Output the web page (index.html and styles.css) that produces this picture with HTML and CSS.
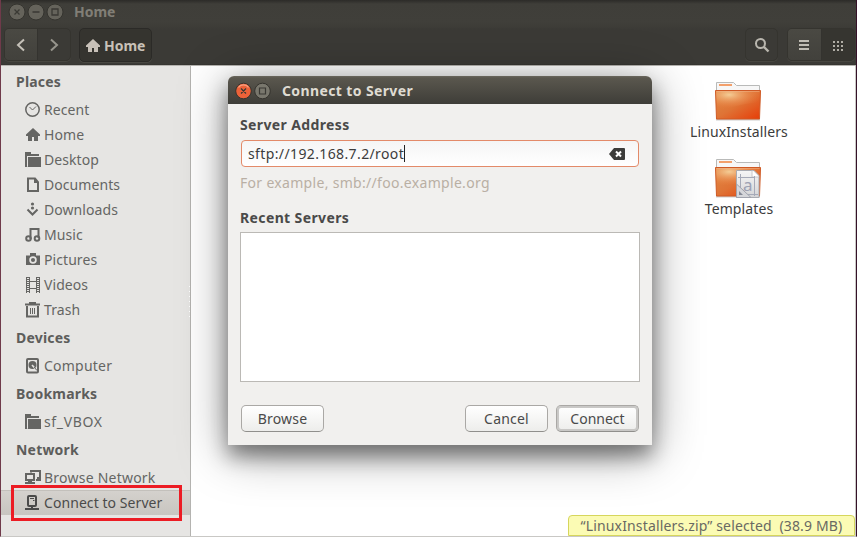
FILE: index.html
```html
<!DOCTYPE html>
<html lang="en">
<head>
<meta charset="utf-8">
<title>Home</title>
<link rel="stylesheet" href="styles.css">
</head>
<body>
<svg class="defs" width="0" height="0">
  <defs>
    <linearGradient id="fold" x1="0" y1="0" x2="1" y2="1"><stop offset="0" stop-color="#e08a45"/><stop offset=".5" stop-color="#df7335"/><stop offset="1" stop-color="#e63c08"/></linearGradient>
    <radialGradient id="glow" cx=".3" cy=".2" r=".75"><stop offset="0" stop-color="#f6d6a0" stop-opacity=".9"/><stop offset="1" stop-color="#ee7a3c" stop-opacity="0"/></radialGradient>
    <linearGradient id="paper" x1="0" y1="0" x2="0" y2="1"><stop offset="0" stop-color="#f6f6f6"/><stop offset="1" stop-color="#d4d4d6"/></linearGradient>
    <symbol id="folder" viewBox="0 0 48 42">
      <path d="M2.500 12V1.500h17l3 3h23V12z" fill="#f7f7f7" stroke="#b9bab9"/>
      <path d="M5 3h13v2H5z" fill="#f3a06c"/>
      <path d="M2 38.500h44" stroke="#000" stroke-opacity=".2" stroke-width="2"/>
      <path d="M1.500 9.500h45l-1 28.500h-43z" fill="url(#fold)" stroke="#cf5a25"/>
      <path d="M2 10h44l-1 12C30 21 16 28 3 29z" fill="url(#glow)"/>
      <path d="M2.500 10.500h43" stroke="#f2b58c" stroke-opacity=".5"/>
    </symbol>
    <symbol id="home" viewBox="0 0 16 16"><path d="M8 1 1 7.500V9h2v5h4v-4h2v4h4V9h2V7.500z" fill="currentColor"/></symbol>
    <symbol id="dir" viewBox="0 0 16 16"><path d="M0 0h6v2h8v2H2v10h14V5H3v10H0z" fill="currentColor"/><path d="M3 5h13v10H3z" fill="currentColor"/><path d="M2.500 15V4.500H15" fill="none" stroke="#e6e5e3" stroke-width=".8"/></symbol>
  </defs>
</svg>
<div class="window">
  <header class="chrome">
    <div class="titlebar">
      <svg class="dots" width="58" height="18" viewBox="0 0 58 18">
        <g fill="#65635b" stroke="#35342f"><circle cx="10" cy="9" r="8"/><circle cx="29" cy="9" r="8"/><circle cx="48" cy="9" r="8"/></g>
        <path d="m7.500 6.500 5 5m0-5-5 5M25.500 9h7M45 6h6v6h-6z" fill="none" stroke="#3a3934" stroke-width="1.300"/>
      </svg>
      <span class="wintitle">Home</span>
    </div>
    <div class="toolbar">
      <div class="group nav">
        <span class="tool raised"><svg width="16" height="16"><path d="M11 2.500 5 8l6 5.500" fill="none" stroke="#c5c1b8" stroke-width="2"/></svg></span>
        <span class="tool"><svg width="16" height="16"><path d="m5 2.500 6 5.500-6 5.500" fill="none" stroke="#97958d" stroke-width="2"/></svg></span>
      </div>
      <div class="path"><svg width="16" height="16"><use href="#home"/></svg><b>Home</b></div>
      <div class="group search"><span class="tool"><svg width="16" height="16"><circle cx="6.500" cy="6.500" r="4.500" fill="none" stroke="#b9b6ae" stroke-width="2"/><path d="m10 10 4.500 4.500" stroke="#b9b6ae" stroke-width="2.400"/></svg></span></div>
      <div class="group views">
        <span class="tool raised"><svg width="16" height="16"><path d="M3 4h10M3 8h10M3 12h10" stroke="#c0bdb4" stroke-width="2"/></svg></span>
        <span class="tool sunk"><svg width="16" height="16"><path d="M3 5h10M3 9h10M3 13h10" stroke="#b0ada5" stroke-width="2" stroke-dasharray="2 2"/></svg></span>
      </div>
    </div>
  </header>
  <div class="main">
    <nav class="side">
      <h2>Places</h2>
      <a><svg width="16" height="16"><circle cx="7.500" cy="7.500" r="6.700" fill="none" stroke="currentColor" stroke-width="1.500"/><path d="m4.500 5 3 3L11 4.500" fill="none" stroke="currentColor"/></svg><span>Recent</span></a>
      <a><svg width="16" height="16"><use href="#home"/></svg><span>Home</span></a>
      <a><svg width="16" height="16"><use href="#dir"/></svg><span>Desktop</span></a>
      <a><svg width="16" height="16"><path d="M3 1.500h7L13 5v9H3z" fill="none" stroke="currentColor" stroke-width="2"/><path d="M9 1v5h5z" fill="currentColor"/></svg><span>Documents</span></a>
      <a><svg width="16" height="16"><circle cx="7.500" cy="2" r="1.600" fill="currentColor"/><circle cx="7.500" cy="6" r="1.600" fill="currentColor"/><path d="m2.500 7.500 5 5 5-5" fill="none" stroke="currentColor" stroke-width="2"/></svg><span>Downloads</span></a>
      <a><svg width="16" height="16"><path d="M5.500 12V2h8v9" fill="none" stroke="currentColor" stroke-width="2"/><circle cx="3.500" cy="11.500" r="2.300" fill="none" stroke="currentColor" stroke-width="2"/><circle cx="12" cy="11.500" r="2.300" fill="none" stroke="currentColor" stroke-width="2"/></svg><span>Music</span></a>
      <a><svg width="16" height="16"><path d="M1 3.500h4V1h6v2.500h4V13H1z" fill="currentColor"/><circle cx="8" cy="8" r="2.900" fill="none" stroke="#e6e5e3" stroke-width="1.700"/></svg><span>Pictures</span></a>
      <a><svg width="16" height="16"><path d="M1.500 0v16M4.500 0v16M11.500 0v16M14.500 0v16M4 4.500h8M4 11.500h8" stroke="currentColor"/><path d="M3 0v16M13 0v16" stroke="currentColor" stroke-width="2" stroke-dasharray="1 1"/></svg><span>Videos</span></a>
      <a><svg width="16" height="16"><path d="M0 2.500h15M4 1h7" stroke="currentColor" stroke-width="2"/><path d="M2 4v10.500h11V4" fill="none" stroke="currentColor" stroke-width="2"/><path d="M5.500 6v6M7.500 6v6M9.500 6v6" stroke="currentColor"/></svg><span>Trash</span></a>
      <h2>Devices</h2>
      <a><svg width="16" height="16"><rect x="2" y="1" width="11" height="13.500" rx="1" fill="none" stroke="currentColor" stroke-width="2"/><circle cx="7.500" cy="7" r="4" fill="currentColor"/><path d="m7 7 4.500 5" stroke="#e6e5e3" stroke-width="1.600"/><path d="m9 9 3 3.500" stroke="currentColor"/></svg><span class="wide">Computer</span></a>
      <h2>Bookmarks</h2>
      <a><svg width="16" height="16"><use href="#dir"/></svg><span class="wider">sf_VBOX</span></a>
      <h2>Network</h2>
      <a><svg width="16" height="16"><path d="M6 2.500V1h9v7h-3M1 4h8v6H1z" fill="none" stroke="currentColor" stroke-width="2"/><path d="M0 12h10v2H0zM3 10h4v3H3zM11 9h5v2h-5z" fill="currentColor"/></svg><span class="wide">Browse Network</span></a>
      <a class="selected"><svg width="16" height="16"><rect x="3" y="1" width="8" height="10" rx="1" fill="none" stroke="currentColor" stroke-width="2"/><path d="M5 3.500h4M8 5.500h1.500" stroke="currentColor"/><path d="M6 11h2v2h6v2H0v-2h6z" fill="currentColor"/></svg><span>Connect to Server</span></a>
      <i class="grip"></i>
      <div class="callout"></div>
    </nav>
    <section class="files">
      <figure><svg width="48" height="42"><use href="#folder"/></svg><figcaption>LinuxInstallers</figcaption></figure>
      <figure><svg width="48" height="42"><use href="#folder"/>
        <path d="M22.500 12.500H40l5 5v22H22.500z" fill="url(#paper)" stroke="#a9abb1"/><path d="M38 12.500V19h7" fill="#fff" stroke="#c8c8ca"/>
        <path d="M24 19.500h17M26.500 16v21M40.500 18v20M25 36.500h19" stroke="#a6aab8"/><text x="29" y="33" class="glyph">a</text>
        <path d="M22.500 26v13.500H37z" fill="#d5d6da" stroke="#a0a3ad"/><path d="M25 33v4h4z" fill="#858996"/></svg><figcaption>Templates</figcaption></figure>
      <div class="status">“LinuxInstallers.zip” selected &nbsp;(38.9 MB)</div>
    </section>
  </div>
  <div class="dialog">
    <div class="dtitle">
      <svg width="38" height="18" viewBox="0 0 38 18"><circle cx="9.500" cy="9" r="7.800" fill="#ec6239" stroke="#35332e"/><path d="M4.500 5.500a6 6 0 0 1 10 0" fill="none" stroke="#f7a283" stroke-width="1.300"/><circle cx="28.500" cy="9" r="7.800" fill="#79776d" stroke="#35332e"/><path d="m7 6.500 5 5m0-5-5 5M25.500 6h6v6h-6z" fill="none" stroke="#3a3934" stroke-width="1.200"/></svg>
      <span>Connect to Server</span>
    </div>
    <div class="dbody">
      <label>Server Address</label>
      <div class="entry"><span class="url">sftp://192.168.7.2/root</span><i class="caret"></i><svg width="16" height="12"><path d="M5 0h10q1 0 1 1v10q0 1-1 1H5L0 6z" fill="#3c3c3a"/><path d="m7 3.500 5 5m0-5-5 5" stroke="#fff" stroke-width="2"/></svg></div>
      <p class="hint">For example, smb://foo.example.org</p>
      <label>Recent Servers</label>
      <div class="list"></div>
      <div class="actions"><button>Browse</button><button class="cancel">Cancel</button><button class="default">Connect</button></div>
    </div>
  </div>
</div>
</body>
</html>
```

FILE: styles.css
```css
* { box-sizing: border-box; }
body { margin: 0; overflow: hidden; font: 14px/20px "Noto Sans", "Open Sans", sans-serif; color: #3c3c3c; }
.defs { position: absolute; }
svg { flex: none; }
.window { position: relative; width: 857px; height: 537px; border-left: 1px solid #6f3a4a; border-right: 1px solid #351128; border-bottom: 1px solid #c9c8c5; overflow: hidden; display: flex; flex-direction: column; background: #fff; }
.chrome { height: 66px; flex: none; background: linear-gradient(#2c2b28 0, #3f3e39 4px, #403f3a 22px, #3b3a36 30px, #3b3a36 64px, #32312d 65px, #b5b3af 65px); }
.titlebar { height: 24px; display: flex; align-items: center; padding-left: 6px; gap: 9px; }
.wintitle { font-weight: 700; color: #817e76; }
.toolbar { height: 41px; padding: 4px 1px 0 3px; display: flex; align-items: flex-start; }
.group { display: flex; height: 33px; border: 1px solid #35342f; border-radius: 5px; overflow: hidden; box-shadow: 0 1px 0 #474640; }
.tool { flex: 1; display: flex; align-items: center; justify-content: center; }
.raised { background: linear-gradient(#4a4943, #42413c); border-right: 1px solid #34332f; }
.sunk { background: #363530; }
.nav { width: 67px; }
.nav .tool { padding-right: 1px; }
.search { width: 33px; margin-left: auto; }
.views { width: 68px; margin-left: 9px; }
.path { width: 73px; height: 34px; margin-left: 8px; border: 1px solid #2b2a27; border-radius: 5px; background: #35342f; box-shadow: 0 1px 0 #494842; display: flex; align-items: center; gap: 3px; padding: 2px 0 0 5px; color: #c8c1b8; }
.main { flex: 1; min-height: 0; display: flex; }
.side { position: relative; width: 190px; flex: none; background: #e6e5e3; border-right: 1px solid #b4b3b0; color: #656563; }
.side h2 { margin: 0; height: 31px; padding-left: 15px; font-size: 14px; line-height: 31px; font-weight: 700; letter-spacing: .2px; color: #5d5d5b; }
.side a { display: flex; height: 25px; align-items: center; gap: 3px; padding-left: 24px; white-space: nowrap; letter-spacing: .07px; }
.side .wide { letter-spacing: .23px; }
.side .wider { letter-spacing: .65px; }
.side .selected { background: linear-gradient(#d4d1cd, #c8c5c0); border-top: 1px solid #c3c0bb; color: #4b4b4a; }
.grip { position: absolute; right: 0; top: 220px; width: 1px; height: 33px; background: repeating-linear-gradient(#fff 0 1px, transparent 1px 5px); }
.callout { position: absolute; left: 10px; top: 419px; width: 171px; height: 36px; border: 3px solid #ec1c24; }
.files { position: relative; flex: 1; border-right: 1px solid #c9c8c5; padding: 15px 65px 0 0; display: flex; flex-direction: column; align-items: flex-end; }
figure { margin: 0; width: 102px; height: 77px; display: flex; flex-direction: column; align-items: center; }
figure svg { margin-left: -2px; }
figcaption { margin-top: -1px; white-space: nowrap; letter-spacing: .1px; }
.glyph { font: 17px "Noto Sans", sans-serif; fill: #9da1b3; }
.status { position: absolute; right: 0; bottom: 0; width: 287px; height: 21px; border: 1px solid #d6d65c; border-radius: 4px 4px 0 0; background: #fbfbb4; color: #696963; text-align: center; line-height: 19px; letter-spacing: .15px; white-space: nowrap; }
.dialog { position: absolute; left: 227px; top: 76px; width: 424px; height: 369px; border-radius: 6px 6px 0 0; background: #f1f0ee; box-shadow: 0 11px 20px rgba(0,0,0,.42), 0 7px 50px rgba(0,0,0,.4); }
.dtitle { height: 28px; border-radius: 6px 6px 0 0; background: linear-gradient(#6a675d 0, #5a574e 2px, #3e3d38); display: flex; align-items: center; padding: 1px 0 0 6px; gap: 10px; color: #dfdbd2; font-weight: 700; letter-spacing: .38px; }
.dbody { padding: 11px 12px 0; }
.dbody label { display: block; font-weight: 700; letter-spacing: .38px; color: #4a4a49; }
.entry { height: 27px; margin: 5px 1px 0; border: 1px solid #e38a69; border-radius: 4px; background: linear-gradient(#f5f5f5, #fff); display: flex; align-items: center; padding: 0 13px 0 6px; }
.url { letter-spacing: .38px; }
.entry svg { margin-left: auto; }
.caret { width: 1px; height: 17px; background: #222; }
.hint { margin: 6px 0 15px; letter-spacing: .31px; color: #b9afa4; }
.list { height: 150px; margin-top: 4px; border: 1px solid #bbb9b5; background: #fff; }
.actions { display: flex; margin: 23px 1px 0; }
button { width: 83px; height: 27px; padding: 0; border: 1px solid #aaa8a5; border-bottom-color: #908f8c; border-radius: 5px; background: linear-gradient(#fff, #ededeb); font: inherit; letter-spacing: .2px; color: #4a4a4a; }
.cancel { margin-left: auto; }
.default { margin-left: 8px; letter-spacing: 0; box-shadow: inset 0 0 0 2px #c9c8c6; }
```
